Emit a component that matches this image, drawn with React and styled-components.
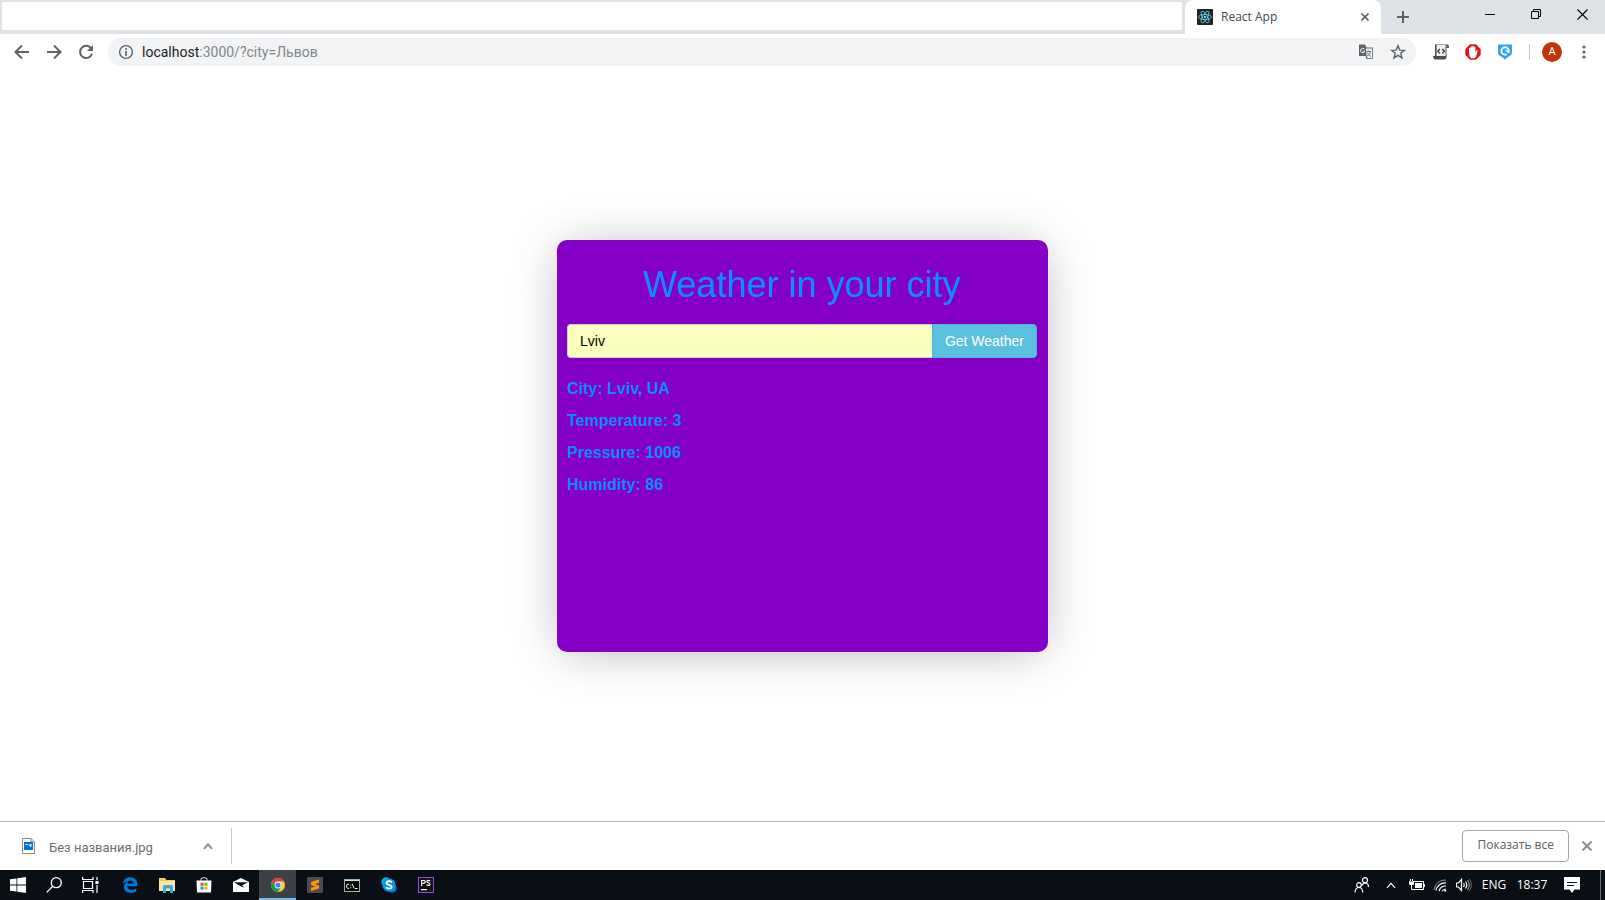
import React from "react";
import styled, { createGlobalStyle } from "styled-components";

const UI_FONT = '"Open Sans", "Noto Sans", sans-serif';

const GlobalStyle = createGlobalStyle`
  *, *::before, *::after { box-sizing: border-box; }
  body { margin: 0; background: #fff; font-family: ${UI_FONT}; }
  button, input { font: inherit; margin: 0; }
  svg { display: block; flex: none; }
`;

const Screen = styled.div`
  min-height: 100vh;
  display: flex;
  flex-direction: column;
`;

const TabStrip = styled.header`
  display: flex;
  height: 34px;
  background: #dee1e6;
`;

const BlankTabs = styled.div`
  flex: 1;
  margin: 2px 3px 4px 2px;
  background: #fff;
`;

const Tab = styled.div`
  display: flex;
  align-items: center;
  width: 196px;
  padding: 0 10px 0 12px;
  gap: 8px;
  background: #fff;
  border-radius: 8px 8px 0 0;
  color: #45494d;
  font-size: 12px;
  line-height: 16px;
`;

const TabTitle = styled.span`
  flex: 1;
`;

const IconButton = styled.button`
  display: flex;
  align-items: center;
  justify-content: center;
  flex: none;
  width: ${(p) => p.$width || 32}px;
  height: ${(p) => p.$height || 28}px;
  padding: 0;
  border: 0;
  background: transparent;
  color: ${(p) => p.$color || "#5f6368"};
`;

const NewTab = styled.div`
  display: flex;
  align-items: center;
  padding: 0 48px 0 6px;
`;

const WindowControls = styled.div`
  display: flex;
`;

const Toolbar = styled.nav`
  display: flex;
  align-items: center;
  height: 36px;
  padding: 0 5px 0 6px;
  background: #fff;
`;

const AddressBar = styled.div`
  display: flex;
  align-items: center;
  flex: 1;
  height: 28px;
  margin: 0 9px 0 6px;
  padding: 0 2px 0 10px;
  border-radius: 14px;
  background: #f1f3f4;
  color: #5f6368;
`;

const Address = styled.p`
  flex: 1;
  margin: 0 0 0 8px;
  color: #80868b;
  font-family: Roboto, sans-serif;
  font-size: 14px;
  line-height: 20px;
`;

const Host = styled.span`
  color: #202124;
`;

const ToolbarDivider = styled.span`
  width: 1px;
  height: 16px;
  margin: 0 6px 0 8px;
  background: #c8cacd;
`;

const Avatar = styled.span`
  width: 20px;
  height: 20px;
  border-radius: 50%;
  background: #bf360c;
  color: #fff;
  font: 11px/20px Roboto, sans-serif;
  text-align: center;
`;

const Page = styled.main`
  flex: 1;
  display: flex;
  align-items: center;
  justify-content: center;
  font-family: "Liberation Sans", Arial, sans-serif;
`;

const WeatherCard = styled.section`
  width: min(491px, 100%);
  min-height: 412px;
  padding: 24px 11px 10px 10px;
  border-radius: 10px;
  background: #8500c5;
  color: #0a8bff;
  box-shadow: 0 3px 50px -6px rgba(0, 0, 0, 0.3);
`;

const Title = styled.h1`
  margin: 0 0 18px;
  font-size: 36px;
  font-weight: 400;
  line-height: 42px;
  text-align: center;
`;

const SearchForm = styled.form`
  display: flex;
  height: 34px;
  margin-bottom: 20px;
  font-size: 14px;
`;

const CityInput = styled.input`
  flex: 1;
  min-width: 0;
  padding: 6px 12px;
  border: 1px solid #ccc;
  border-right: 0;
  border-radius: 4px 0 0 4px;
  background: #faffbd;
  color: #000;
  line-height: 20px;
`;

const SubmitButton = styled.button`
  padding: 6px 12px;
  border: 1px solid #46b8da;
  border-radius: 0 4px 4px 0;
  background: #5bc0de;
  color: #fff;
  line-height: 20px;
`;

const Reading = styled.p`
  margin: 0 0 10px;
  font-size: 16px;
  font-weight: 700;
  line-height: 22px;
`;

const DownloadShelf = styled.aside`
  display: flex;
  align-items: center;
  height: 49px;
  border-top: 1px solid #b0b0b0;
  background: #fff;
`;

const DownloadItem = styled.div`
  display: flex;
  align-items: center;
  width: 232px;
  height: 36px;
  padding: 0 7px 0 22px;
  border-right: 1px solid #c6c6c6;
`;

const FileName = styled.span`
  flex: 1;
  padding: 4px 0 0 14px;
  color: #6b6e72;
  font-family: Roboto, sans-serif;
  font-size: 13px;
  line-height: 20px;
`;

const ShowAll = styled.button`
  height: 32px;
  margin-left: auto;
  padding: 0 14px 2px;
  border: 1px solid #a4a6a9;
  border-radius: 4px;
  background: #fff;
  color: #5a5d62;
  font-size: 12px;
  font-weight: 500;
  line-height: 20px;
`;

const Taskbar = styled.footer`
  display: flex;
  height: 30px;
  background: #0a0e15;
  color: #fff;
`;

const TaskButton = styled(IconButton)`
  height: 30px;
  color: #fff;
  border-bottom: 2px solid ${(p) => (p.$active ? "#76b9ed" : "transparent")};
  border-top: 2px solid ${(p) => (p.$active ? "#3d4045" : "transparent")};
  background: ${(p) => (p.$active ? "#3d4045" : "transparent")};
`;

const Tray = styled.div`
  display: flex;
  align-items: center;
  margin-left: auto;
  padding-right: 4px;
  font-size: 12px;
`;

const TrayText = styled.span`
  width: ${(p) => p.$width}px;
  text-align: center;
  line-height: 20px;
`;

const DesktopEdge = styled.span`
  width: 1px;
  height: 30px;
  margin-left: 8px;
  background: #6a6d72;
`;

const Svg = ({ s = 16, w, h, box, children, ...rest }) => (
  <svg width={w || s} height={h || s} viewBox={box || `0 0 ${w || s} ${h || s}`} fill="none" stroke="currentColor" aria-hidden="true" {...rest}>
    {children}
  </svg>
);

const ReactLogo = () => (
  <Svg>
    <rect width="16" height="16" rx="1" fill="#222" stroke="none" />
    <g stroke="#61dafb" strokeWidth="0.8">
      <ellipse cx="8" cy="8" rx="6.5" ry="2.5" />
      <ellipse cx="8" cy="8" rx="6.5" ry="2.5" transform="rotate(60 8 8)" />
      <ellipse cx="8" cy="8" rx="6.5" ry="2.5" transform="rotate(120 8 8)" />
    </g>
    <circle cx="8" cy="8" r="1.3" fill="#61dafb" stroke="none" />
  </Svg>
);

const Cross = ({ s = 8, width = 1.6 }) => (
  <Svg s={s} strokeWidth={width}>
    <path d={`M.5 .5 L${s - 0.5} ${s - 0.5} M${s - 0.5} .5 L.5 ${s - 0.5}`} />
  </Svg>
);

const Plus = () => <Svg s={12} strokeWidth="2"><path d="M6 0V12M0 6H12" /></Svg>;
const Minimize = () => <Svg s={10}><path d="M0 5.5H10" /></Svg>;
const Restore = () => <Svg s={10}><path d="M.5 2.5H7.5V9.5H.5ZM2.5 2.5V.5H9.5V7.5H7.5" /></Svg>;
const Back = () => <Svg strokeWidth="2"><path d="M15 8H2M8 1.5 1.5 8 8 14.5" /></Svg>;
const Forward = () => <Svg strokeWidth="2"><path d="M1 8H14M8 1.5 14.5 8 8 14.5" /></Svg>;
const Reload = () => (
  <Svg>
    <path d="M13.3 4.6A6.1 6.1 0 1 0 14 9.8" strokeWidth="2" />
    <path d="M15 1V7H9Z" fill="currentColor" stroke="none" />
  </Svg>
);
const Info = () => (
  <Svg>
    <circle cx="8" cy="8" r="6.4" strokeWidth="1.4" />
    <path d="M8 7V12M8 4V5.7" strokeWidth="1.7" />
  </Svg>
);
const Translate = () => (
  <Svg>
    <path d="M1 .5H7L8.5 3.5H15V15H8.5L7.5 12H1Z" fill="#5f6368" stroke="none" />
    <path d="M8 4.5H14.2V14.2H9.6L8.6 12Z" fill="#f1f3f4" stroke="none" />
    <path d="M6.5 5.3A2.2 2.2 0 1 0 6.8 7.2H4.8" stroke="#f1f3f4" />
    <path d="M8.5 7.5H13M10.8 6.5V7.5M12.4 7.6C12 9.7 10.5 11.2 9 12M9.4 8.7C10.2 10.5 11.5 11.6 13 12.5" stroke="#5f6368" strokeWidth=".9" />
  </Svg>
);
const Star = () => (
  <Svg>
    <path d="M8 1.7 9.7 6.1 14.4 6.3 10.7 9.3 12 13.9 8 11.3 4 13.9 5.3 9.3 1.6 6.3 6.3 6.1Z" strokeWidth="1.4" />
  </Svg>
);
const Script = () => (
  <Svg>
    <path d="M2 .5H15Q16 1 16 4H13.5V13.5Q13 15.5 11.5 15.5H1.5Q0 15 0 12H2Z" fill="#4d4d4d" stroke="none" />
    <path d="M3.6 1H12.6V12H3.6Z" fill="#eee" stroke="none" />
    <path d="M6.8 5 4.8 7.2 6.8 9.4M9.4 5 11.4 7.2 9.4 9.4" stroke="#333" strokeWidth="1.3" />
    <path d="M13.8 1.8V3.2" stroke="#bbb" strokeWidth=".8" />
  </Svg>
);
const AdBlock = () => (
  <Svg>
    <path d="M5 .3H11L15.7 5V11L11 15.7H5L.3 11V5Z" fill="#e3161b" stroke="none" />
    <path d="M4 8.5V4.2Q4.8 3.2 5.5 4.2V2.7Q6.3 1.7 7.1 2.7V2.2Q8 1.2 8.9 2.2V3Q9.8 2.3 10.4 3.3V8L11.6 6.3Q13 6 12.6 7.2L11 12.5 9.8 14.2H6Q4 12 4 8.5Z" fill="#fff" stroke="none" />
  </Svg>
);
const Shield = () => (
  <Svg w={14} h={16}>
    <path d="M1 .5H13Q14 .5 14 1.5V8.5Q14 11.5 9.5 13.3L7 15.8 4.5 13.3Q0 11.5 0 8.5V1.5Q0 .5 1 .5Z" fill="#2ea3f7" stroke="none" />
    <path d="M8.8 10.2A3.7 3.7 0 1 1 10.7 6.3" stroke="#fff" strokeWidth="1.8" />
    <path d="M6.7 6.3H11.8V8L10.3 9.2Z" fill="#fff" stroke="none" />
  </Svg>
);
const Dots = () => (
  <Svg w={4} h={14} fill="currentColor" stroke="none">
    <circle cx="2" cy="2" r="1.6" /><circle cx="2" cy="7" r="1.6" /><circle cx="2" cy="12" r="1.6" />
  </Svg>
);
const ImageFile = () => (
  <Svg w={13} h={16}>
    <path d="M.5 .5H9L12.5 4V15.5H.5Z" fill="#fff" stroke="#8b8b8b" />
    <path d="M9 .5V4H12.5" stroke="#8b8b8b" />
    <rect x="2" y="4" width="9" height="8" fill="#0078d7" stroke="none" />
    <path d="M3.5 6.5H5.5M6.5 7H9.5M8.8 6V9" stroke="#fff" />
  </Svg>
);
const Caret = ({ s = 10, width = 2 }) => <Svg w={s} h={7} box="0 0 10 7" strokeWidth={width}><path d="M1 5.8 5 1.3 9 5.8" /></Svg>;

const WindowsLogo = () => (
  <Svg fill="#fff" stroke="none">
    <path d="M0 2.3 6.5 1.4V7.5H0ZM7.3 1.3 16 0V7.5H7.3ZM0 8.4H6.5V14.6L0 13.7ZM7.3 8.4H16V16L7.3 14.7Z" />
  </Svg>
);
const Search = () => <Svg strokeWidth="1.3"><circle cx="10.3" cy="5.7" r="5" /><path d="M6.8 9.3.7 15.4" /></Svg>;
const TaskView = () => (
  <Svg w={17} h={16} strokeWidth="1.2">
    <path d="M.6 0V2.5H11V0M.6 16V13.5H11V16M1.5 4.5H10.5V11.5H1.5ZM15 0V3M15 8V16" />
    <path d="M13.5 4H16.5V7H13.5Z" fill="#fff" stroke="none" />
  </Svg>
);
const Edge = () => (
  <Svg fill="#0078d7" stroke="none">
    <path d="M.6 7.2C1.3 2.8 4.2.2 8.3.2C12.8.2 15.5 3.4 15.5 7.7V9.2H5.2C5.4 11.7 7.4 12.8 9.8 12.8C11.6 12.8 13.1 12.3 14.3 11.5V14.6C12.8 15.5 11 15.9 9 15.9C4.6 15.9 1.9 13.5 1.9 10C1.9 7.7 3.2 5.6 5.2 4.6C3.3 4.8 1.6 5.8.6 7.2ZM5.3 6.6H11.4C11.4 4.7 10.2 3.6 8.5 3.6C6.8 3.6 5.6 4.8 5.3 6.6Z" />
  </Svg>
);
const Folder = () => (
  <Svg w={18} h={16} stroke="none">
    <path d="M1 1H7L8.5 3H17V14H1Z" fill="#f8c95c" />
    <path d="M1 4H17V14H1Z" fill="#ffe698" />
    <path d="M5 16V10Q5 8 7 8H13Q15 8 15 10V16H12V11.5H8V16Z" fill="#39a9e6" />
  </Svg>
);
const Store = () => (
  <Svg>
    <path d="M5 4V1.5Q8 -.3 11 1.5V4" stroke="#ddd" />
    <path d="M.5 3.5H15.5L15 15.5H1Z" fill="#fff" stroke="none" />
    <path d="M4.5 5.7H7.6V8.8H4.5Z" fill="#f25022" stroke="none" />
    <path d="M8.4 5.7H11.5V8.8H8.4Z" fill="#7fba00" stroke="none" />
    <path d="M4.5 9.6H7.6V12.7H4.5Z" fill="#00a4ef" stroke="none" />
    <path d="M8.4 9.6H11.5V12.7H8.4Z" fill="#ffb900" stroke="none" />
  </Svg>
);
const Mail = () => (
  <Svg w={16} h={14} stroke="none">
    <path d="M0 4 8 0 16 4V14H0Z" fill="#fff" />
    <path d="M1 4.2H15L9.2 7.2 11 9.8 7.2 8.1Z" fill="#0a0e15" />
  </Svg>
);
const Chrome = () => (
  <Svg s={14} stroke="none">
    <circle cx="7" cy="7" r="7" fill="#ffcd41" />
    <path d="M.9 3.5A7 7 0 0 1 13.1 3.6H7L4 8.7Z" fill="#db4437" />
    <path d="M.9 3.5 4.2 9 7 10.2 10 8.7 6.8 14A7 7 0 0 1 .9 3.5Z" fill="#0f9d58" />
    <circle cx="7" cy="7" r="3.4" fill="#fff" />
    <circle cx="7" cy="7" r="2.6" fill="#4285f4" />
  </Svg>
);
const Sublime = () => (
  <Svg stroke="none">
    <rect width="16" height="16" rx="1" fill="#4b4b4b" />
    <path d="M12 2.5V5.7L7.5 7.1 12 8.6V11.5L4 14V10.8L8.6 9.4 4 7.9V5Z" fill="#ff9800" />
  </Svg>
);
const Terminal = () => (
  <Svg w={16} h={13}>
    <rect x=".5" y=".5" width="15" height="12" fill="#000" stroke="#aaa" />
    <path d="M1 1.5H15" stroke="#ddd" />
    <path d="M5 5.2H3.3L2.7 6V8.5L3.3 9.3H5M6.8 5.5V6.5M6.8 8.3V9.3M8.3 5 10.2 9.5M11 9.5H13.5" stroke="#fff" />
  </Svg>
);
const Skype = () => (
  <Svg stroke="none">
    <circle cx="5" cy="5" r="4.7" fill="#00aff0" /><circle cx="11" cy="11" r="4.7" fill="#0078d7" />
    <circle cx="8" cy="8" r="6.6" fill="#0799e5" />
    <path d="M10.8 5.5C9.8 3.6 5.6 3.8 5.6 6C5.6 8.4 10.6 7.4 10.6 9.8C10.6 12.2 6 12.3 5.1 10.2" fill="none" stroke="#fff" strokeWidth="1.8" />
  </Svg>
);
const PhpStorm = () => (
  <Svg>
    <rect x=".5" y=".5" width="15" height="15" fill="#111" stroke="#9b45e8" />
    <path d="M3.6 9V3.5H6Q7.5 3.7 7.2 5.2Q7 6.5 4 6.5M12.3 4Q8.8 2.7 8.8 4.5C8.8 6 12 5.5 12 7.3Q11.5 9 8.5 7.9M3 12.7H9" stroke="#fff" strokeWidth="1.2" />
  </Svg>
);
const People = () => (
  <Svg strokeWidth="1.2">
    <circle cx="5" cy="8" r="2.3" /><path d="M1 15.5Q1.3 10.5 5 10.5Q8.5 10.5 8.8 15.5" />
    <circle cx="11" cy="3.2" r="2.5" /><path d="M8 8.5Q9 6 11.5 6Q14.5 6.2 14.5 10" />
  </Svg>
);
const Battery = () => (
  <Svg w={17} h={12}>
    <path d="M6 2.5H15.5V10.5H3.5V6M1.5 2V5.5H5.5V2M2.5 0V2M4.5 0V2" />
    <path d="M2 2.5H5V5H2ZM7 4H14V9H7ZM16 5H17V8H16Z" fill="#fff" stroke="none" />
  </Svg>
);
const Wifi = () => (
  <Svg w={15} h={14}>
    <path d="M1 12A11 11 0 0 1 13 2" stroke="#999" />
    <path d="M3 12.5A9 9 0 0 1 13 5M6 13A7 7 0 0 1 13 8M9 13.3A5 5 0 0 1 13 11" strokeWidth="1.2" />
    <circle cx="12.2" cy="12.8" r="1" fill="#fff" stroke="none" />
  </Svg>
);
const Volume = () => (
  <Svg w={16} h={14}>
    <path d="M.5 5H2.5L5.5 1.5V12.5L2.5 9H.5ZM7.5 5Q9 7 7.5 9M9.5 3.5Q12 7 9.5 10.5" strokeWidth="1.2" />
    <path d="M11.5 2Q15 7 11.5 12" stroke="#bbb" />
    <path d="M13.3 .8Q17.5 7 13.3 13.2" stroke="#666" />
  </Svg>
);
const ActionCenter = () => (
  <Svg w={16} h={16} stroke="none">
    <path d="M0 0H16V12.5H10.5L8 16L5.5 12.5H0Z" fill="#fff" />
    <path d="M3 5.5H13M3 8.5H10" stroke="#0a0e15" />
  </Svg>
);

const tasks = [
  { label: "Microsoft Edge", icon: <Edge /> },
  { label: "File Explorer", icon: <Folder /> },
  { label: "Microsoft Store", icon: <Store /> },
  { label: "Mail", icon: <Mail /> },
  { label: "Google Chrome", icon: <Chrome />, active: true },
  { label: "Sublime Text", icon: <Sublime /> },
  { label: "Command Prompt", icon: <Terminal /> },
  { label: "Skype", icon: <Skype /> },
  { label: "PhpStorm", icon: <PhpStorm /> },
];

const SystemButtons = styled.div`
  display: flex;
  width: 111px;
`;

const readings = [
  ["City", "Lviv, UA"],
  ["Temperature", "3"],
  ["Pressure", "1006"],
  ["Humidity", "86"],
];

export default function App() {
  return (
    <Screen>
      <GlobalStyle />
      <TabStrip>
        <BlankTabs />
        <Tab>
          <ReactLogo />
          <TabTitle>React App</TabTitle>
          <IconButton $width={12} aria-label="Close tab"><Cross /></IconButton>
        </Tab>
        <NewTab>
          <IconButton aria-label="New tab"><Plus /></IconButton>
        </NewTab>
        <WindowControls>
          <IconButton $width={46} $color="#000" aria-label="Minimize"><Minimize /></IconButton>
          <IconButton $width={46} $color="#000" aria-label="Restore"><Restore /></IconButton>
          <IconButton $width={46} $color="#000" aria-label="Close window"><Cross s={11} width={1.1} /></IconButton>
        </WindowControls>
      </TabStrip>
      <Toolbar>
        <IconButton aria-label="Back"><Back /></IconButton>
        <IconButton aria-label="Forward"><Forward /></IconButton>
        <IconButton aria-label="Reload"><Reload /></IconButton>
        <AddressBar>
          <Info />
          <Address><Host>localhost</Host>:3000/?city=Львов</Address>
          <IconButton aria-label="Translate"><Translate /></IconButton>
          <IconButton aria-label="Bookmark"><Star /></IconButton>
        </AddressBar>
        <IconButton aria-label="User scripts"><Script /></IconButton>
        <IconButton aria-label="Ad blocker"><AdBlock /></IconButton>
        <IconButton aria-label="Shield"><Shield /></IconButton>
        <ToolbarDivider />
        <IconButton aria-label="Profile"><Avatar>A</Avatar></IconButton>
        <IconButton aria-label="Menu"><Dots /></IconButton>
      </Toolbar>
      <Page>
        <WeatherCard>
          <Title>Weather in your city</Title>
          <SearchForm onSubmit={(e) => e.preventDefault()}>
            <CityInput name="city" aria-label="City" defaultValue="Lviv" />
            <SubmitButton type="submit">Get Weather</SubmitButton>
          </SearchForm>
          {readings.map(([name, value]) => (
            <Reading key={name}>{name}: {value}</Reading>
          ))}
        </WeatherCard>
      </Page>
      <DownloadShelf>
        <DownloadItem>
          <ImageFile />
          <FileName>Без названия.jpg</FileName>
          <IconButton $color="#8c8f93" aria-label="Download options"><Caret /></IconButton>
        </DownloadItem>
        <ShowAll>Показать все</ShowAll>
        <IconButton $width={36} $color="#8c8f93" aria-label="Close downloads"><Cross s={10} width={2} /></IconButton>
      </DownloadShelf>
      <Taskbar>
        <SystemButtons>
          <TaskButton $width={36} aria-label="Start"><WindowsLogo /></TaskButton>
          <TaskButton $width={36} aria-label="Search"><Search /></TaskButton>
          <TaskButton $width={36} aria-label="Task view"><TaskView /></TaskButton>
        </SystemButtons>
        {tasks.map((t) => (
          <TaskButton key={t.label} $width={37} $active={t.active} aria-label={t.label}>{t.icon}</TaskButton>
        ))}
        <Tray>
          <TaskButton $width={32} aria-label="People"><People /></TaskButton>
          <TaskButton $width={26} aria-label="Hidden icons"><Caret s={12} width={1.2} /></TaskButton>
          <TaskButton $width={24} aria-label="Battery"><Battery /></TaskButton>
          <TaskButton $width={24} aria-label="Network"><Wifi /></TaskButton>
          <TaskButton $width={24} aria-label="Volume"><Volume /></TaskButton>
          <TrayText $width={36}>ENG</TrayText>
          <TrayText $width={40}>18:37</TrayText>
          <TaskButton $width={40} aria-label="Notifications"><ActionCenter /></TaskButton>
          <DesktopEdge />
        </Tray>
      </Taskbar>
    </Screen>
  );
}
